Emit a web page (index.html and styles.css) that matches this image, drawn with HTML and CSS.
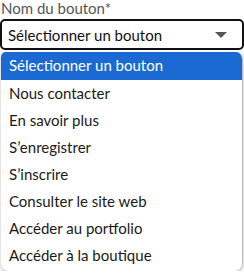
FILE: index.html
```html
<!DOCTYPE html>
<html>
  <head>
    <link rel="stylesheet" href="styles.css">
  </head>
  <body>
    <div class="field">
      <div class="label">Nom du bouton*</div>
      <div class="select">
        <span>Sélectionner un bouton</span>
        <svg class="caret" width="12" height="6" viewBox="0 0 12 6"><path d="M0 0h12L6 6z" fill="#555"/></svg>
      </div>
      <ul class="menu">
        <li class="selected">Sélectionner un bouton</li>
        <li>Nous contacter</li>
        <li>En savoir plus</li>
        <li>S’enregistrer</li>
        <li>S’inscrire</li>
        <li>Consulter le site web</li>
        <li>Accéder au portfolio</li>
        <li>Accéder à la boutique</li>
      </ul>
    </div>
  </body>
</html>
```

FILE: styles.css
```css
body {
  margin: 0;
  font-family: Lato, "Noto Sans", sans-serif;
  background: white;
}
.field {
  position: relative;
  width: 244px;
}
.label {
  font-size: 15px;
  line-height: 16px;
  color: #555;
  padding-left: 1px;
}
.select {
  display: flex;
  align-items: center;
  justify-content: space-between;
  height: 27px;
  margin-top: 3px;
  border: 2px solid #111;
  border-radius: 5px;
  padding: 0 15px 0 6px;
  font-size: 15px;
  color: #111;
}
.menu {
  list-style: none;
  margin: 2px 0 0 1px;
  padding: 0 0 2px;
  width: 241px;
  border-right: 1px solid #bbb;
  border-radius: 5px 7px 8px 8px;
  box-shadow: 0 2px 4px rgba(0, 0, 0, 0.25);
  overflow: hidden;
  font-size: 15px;
  color: #1a1a1a;
}
.menu li {
  height: 27px;
  line-height: 26px;
  padding-left: 8px;
}
.menu li.selected {
  height: 28px;
  line-height: 27px;
  background: #1b6ad3;
  color: white;
}
```
